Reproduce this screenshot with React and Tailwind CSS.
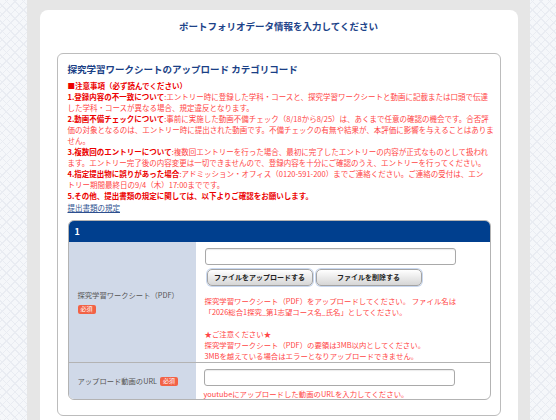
const notes = [
  { b: "■注意事項（必ず読んでください）" },
  { b: "1.登録内容の不一致について", t: ":エントリー時に登録した学科・コースと、探究学習ワークシートと動画に記載または口頭で伝達" },
  { t: "した学科・コースが異なる場合、規定違反となります。" },
  { b: "2.動画不備チェックについて", t: ":事前に実施した動画不備チェック（8/18から8/25）は、あくまで任意の確認の機会です。合否評" },
  { t: "価の対象となるのは、エントリー時に提出された動画です。不備チェックの有無や結果が、本評価に影響を与えることはありま" },
  { t: "せん。" },
  { b: "3.複数回のエントリーについて", t: ":複数回エントリーを行った場合、最初に完了したエントリーの内容が正式なものとして扱われ" },
  { t: "ます。エントリー完了後の内容変更は一切できませんので、登録内容を十分にご確認のうえ、エントリーを行ってください。" },
  { b: "4.指定提出物に誤りがあった場合", t: ":アドミッション・オフィス（0120-591-200）までご連絡ください。ご連絡の受付は、エン" },
  { t: "トリー期間最終日の9/4（木）17:00までです。" },
  { b: "5.その他、提出書類の規定に関しては、以下よりご確認をお願いします。" },
];

const Badge = () => (
  <span className="inline-flex items-center justify-center h-[9px] px-[3px] rounded-[2px] bg-[#f26245] text-white text-[6px] leading-none">
    必須
  </span>
);

const TextBox = () => (
  <div className="w-[251px] h-[17px] bg-white border border-[#a9a9a9] rounded-[3px] shadow-[inset_0_1px_1px_rgba(0,0,0,0.08)]" />
);

const FileButton = ({ children }) => (
  <button className="w-[106px] h-[17px] rounded-[5px] border border-[#a3a3a3] bg-linear-to-b from-white to-[#d6d6d6] text-[7px] font-bold text-[#222] leading-none shadow-[0_0_0_1px_#c9d8f0]">
    {children}
  </button>
);

export default function App() {
  return (
    <div className="h-[420px] overflow-hidden flex justify-center bg-[#f5f7fa] bg-[repeating-linear-gradient(45deg,#e9ecf2_0_1px,transparent_1px_6px),repeating-linear-gradient(-45deg,#e9ecf2_0_1px,transparent_1px_6px)] font-['Noto_Sans_CJK_JP','Noto_Sans',sans-serif]">
      <div className="w-[503px] bg-[#e6e6e6] pl-[13px] pr-[12px] pt-[10px]">
        <div className="bg-white rounded-t-[8px] px-[17px] pt-[10px] pb-[10px]">
          {/* page title */}
          <h1 className="text-center text-[9.5px] leading-[12px] font-bold text-[#1d4389]">
            ポートフォリオデータ情報を入力してください
          </h1>

          <div className="mt-[21px] border border-[#bcbcbc] rounded-[6px] pl-[10px] pr-[9px] pt-[9px] pb-[15px]">
            <h2 className="text-[9.5px] leading-[12px] font-bold text-[#1a3f86]">
              探究学習ワークシートのアップロード カテゴリコード
            </h2>

            {/* notes */}
            <div className="mt-[5px] text-[7.5px] leading-[11px] text-[#ff4545] whitespace-nowrap">
              {notes.map((n, i) => (
                <div key={i}>
                  {n.b && <span className="font-bold text-[#ec0000]">{n.b}</span>}
                  {n.t}
                </div>
              ))}
              <a href="#" className="block mt-[1px] text-[#2d4f8f] underline">
                提出書類の規定
              </a>
            </div>

            {/* form table */}
            <div className="mt-[7px] border border-[#b3b3b3] rounded-[6px] overflow-hidden">
              <div className="h-[21px] bg-[#003f8e] flex items-center px-[6px] text-white text-[9px] font-bold">
                1
              </div>

              <div className="flex">
                <div className="w-[127px] shrink-0 bg-[#d0d9e8] flex flex-col justify-center pl-[9px] text-[7.3px] leading-[11px] text-[#555]">
                  <span>探究学習ワークシート（PDF）</span>
                  <span className="mt-[2px]">
                    <Badge />
                  </span>
                </div>
                <div className="flex-1 pl-[9px] pt-[6px] pb-[1px]">
                  <TextBox />
                  <div className="flex gap-[3px] mt-[4px] ml-[2px]">
                    <FileButton>ファイルをアップロードする</FileButton>
                    <FileButton>ファイルを削除する</FileButton>
                  </div>
                  <div className="mt-[9px] text-[7.4px] leading-[11px] text-[#ff4545]">
                    <p>探究学習ワークシート（PDF）をアップロードしてください。 ファイル名は</p>
                    <p>「2026総合1探究_第1志望コース名_氏名」としてください。</p>
                    <p className="mt-[11px]">★ご注意ください★</p>
                    <p>探究学習ワークシート（PDF）の要領は3MB以内としてください。</p>
                    <p>3MBを越えている場合はエラーとなりアップロードできません。</p>
                  </div>
                </div>
              </div>

              <div className="flex border-t border-[#b3b3b3]">
                <div className="w-[127px] shrink-0 bg-[#d0d9e8] flex items-center gap-[3px] pl-[9px] text-[7.3px] leading-[11px] text-[#555]">
                  <span>アップロード動画のURL</span>
                  <Badge />
                </div>
                <div className="flex-1 pl-[8px] pt-[6px]">
                  <TextBox />
                  <p className="mt-[2px] text-[7.4px] leading-[11px] text-[#ff4545]">
                    youtubeにアップロードした動画のURLを入力してください。
                  </p>
                </div>
              </div>
            </div>
          </div>
        </div>
      </div>
    </div>
  );
}
